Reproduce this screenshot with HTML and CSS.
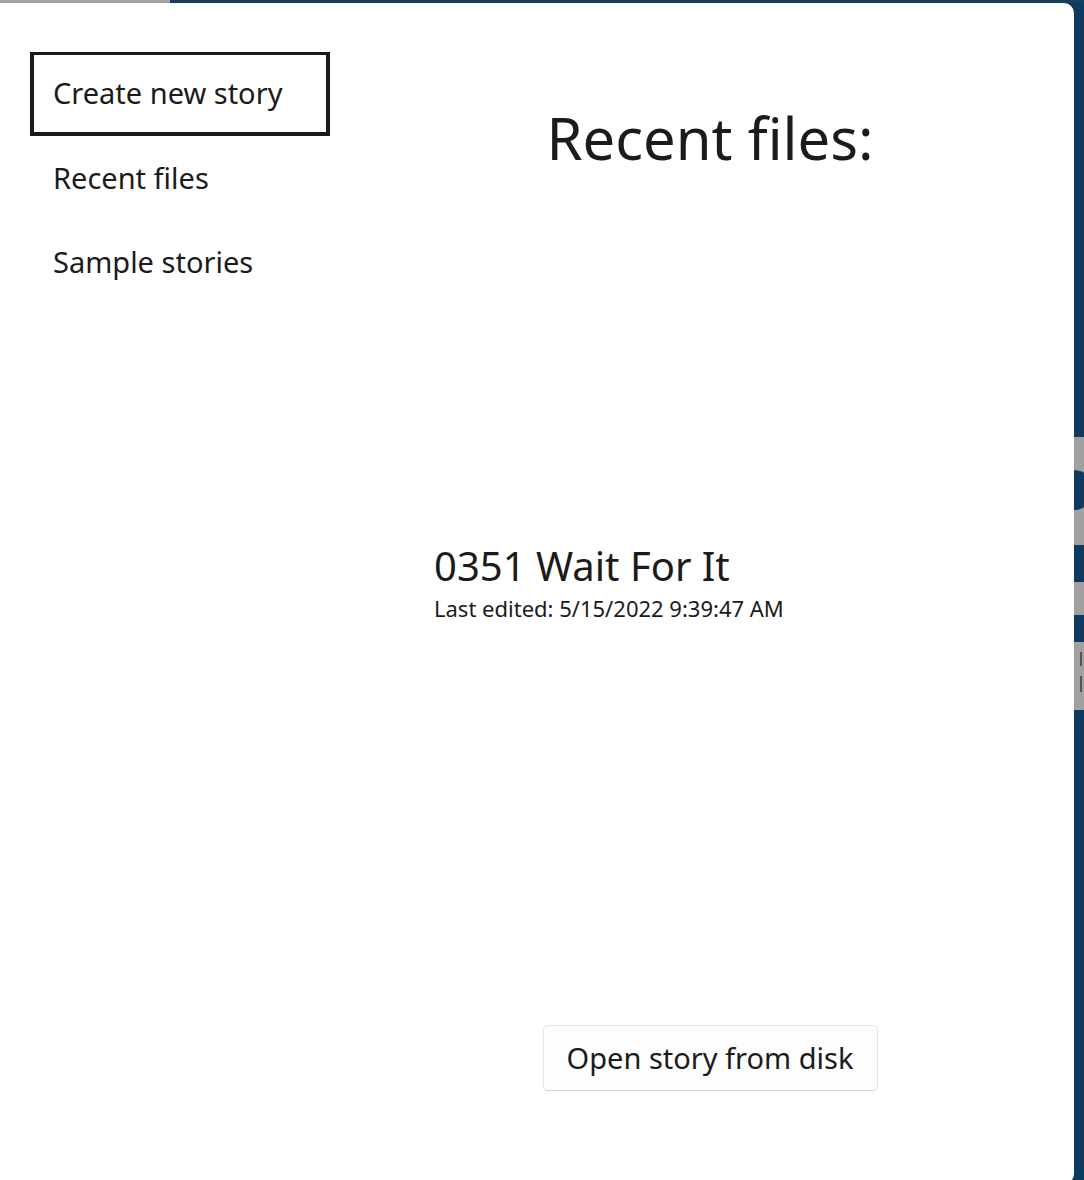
FILE: index.html
```html
<!DOCTYPE html>
<html>
<head>
<meta charset="utf-8">
<link rel="stylesheet" href="styles.css">
</head>
<body>
<div class="topstrip"><div class="topgray"></div></div>
<div class="main">
  <div class="panel">
    <nav class="nav">
      <div class="nav-item selected">Create new story</div>
      <div class="nav-item">Recent files</div>
      <div class="nav-item">Sample stories</div>
    </nav>
    <section class="content">
      <h1 class="heading">Recent files:</h1>
      <div class="list">
        <div class="file">
          <div class="file-name">0351 Wait For It</div>
          <div class="file-date">Last edited: 5/15/2022 9:39:47 AM</div>
        </div>
      </div>
      <button class="open-btn">Open story from disk</button>
    </section>
  </div>
  <div class="side">
    <div class="seg blue" style="height:434px"></div>
    <div class="seg gray g1" style="height:108px"><div class="half"></div></div>
    <div class="seg blue" style="height:37px"></div>
    <div class="seg gray" style="height:33px"></div>
    <div class="seg blue" style="height:27px"></div>
    <div class="seg gray g2" style="height:68px"><div class="tick t1"></div><div class="tick t2"></div></div>
    <div class="seg blue fill"></div>
  </div>
</div>
</body>
</html>
```
FILE: styles.css
```css
html, body {
  margin: 0;
  padding: 0;
  background: #0f3a60;
  overflow: hidden;
}
body {
  width: 1084px;
  height: 1180px;
  font-family: "Noto Sans", "Open Sans", sans-serif;
  color: #1b1b1b;
}
.topstrip {
  height: 3px;
  background: #173d5f;
}
.topgray {
  width: 170px;
  height: 3px;
  background: #a2a2a2;
}
.main {
  display: flex;
  height: 1177px;
}
.panel {
  width: 1074px;
  height: 1181px;
  flex-shrink: 0;
  background: #ffffff;
  border-radius: 0 10px 10px 0;
  display: flex;
  box-shadow: 1px 0 1px rgba(0,0,0,0.25);
}
.nav {
  width: 346px;
  padding: 49px 0 0 30px;
  box-sizing: border-box;
  display: flex;
  flex-direction: column;
}
.nav-item {
  width: 300px;
  height: 84px;
  box-sizing: border-box;
  padding: 0 0 2px 19px;
  border: 4px solid transparent;
  display: flex;
  align-items: center;
  font-size: 29px;
  white-space: nowrap;
}
.nav-item.selected {
  border-color: #1b1b1b;
  border-width: 3px 4px 4px 4px;
  padding-left: 19px;
}
.content {
  flex: 1;
  display: flex;
  flex-direction: column;
  align-items: center;
}
.heading {
  margin: 95px 0 0;
  font-weight: 400;
  font-size: 58px;
  line-height: 80px;
}
.list {
  margin-top: 363px;
  width: 100%;
  padding-left: 88px;
  box-sizing: border-box;
}
.file-name {
  font-size: 40px;
  line-height: 50px;
}
.file-date {
  margin-top: 4px;
  font-size: 22px;
  line-height: 26px;
}
.open-btn {
  margin-top: 404px;
  width: 335px;
  height: 66px;
  background: #fdfdfd;
  border: 1px solid #e5e5e5;
  border-bottom-color: #cfcfcf;
  border-radius: 5px;
  font-family: inherit;
  font-size: 29px;
  color: #1b1b1b;
  padding: 0 0 2px;
}
.side {
  width: 10px;
  display: flex;
  flex-direction: column;
}
.seg.blue { background: #0f3a60; }
.seg.gray { background: #a0a0a0; position: relative; overflow: hidden; }
.seg.fill { flex: 1; }
.half {
  position: absolute;
  left: -20px;
  top: 33px;
  width: 40px;
  height: 40px;
  border-radius: 50%;
  background: #0f3a60;
}
.tick {
  position: absolute;
  left: 6px;
  width: 2px;
  background: #555;
}
.t1 { top: 10px; height: 14px; }
.t2 { top: 34px; height: 16px; }
```
